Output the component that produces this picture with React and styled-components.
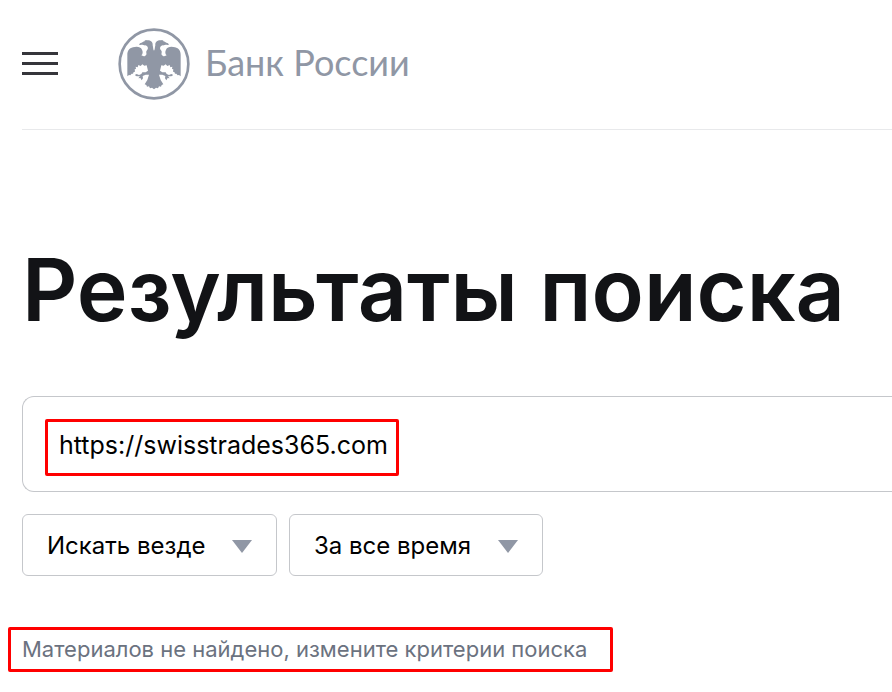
import styled, { createGlobalStyle } from 'styled-components'
import { useState } from 'react'

const GlobalStyle = createGlobalStyle`
  * {
    box-sizing: border-box;
  }

  body {
    margin: 0;
    background: #ffffff;
    color: #000000;
    font-family: Inter, 'Liberation Sans', sans-serif;
  }
`

const Page = styled.div`
  padding-left: 22px;
  overflow-x: hidden;
`

const Header = styled.header`
  display: flex;
  align-items: center;
  gap: 60px;
  height: 130px;
  padding-bottom: 2px;
  border-bottom: 1px solid #e8e9eb;
`

const MenuButton = styled.button`
  display: flex;
  flex-direction: column;
  gap: 7px;
  width: 36px;
  padding: 0;
  border: 0;
  background: none;
  cursor: pointer;
`

const MenuLine = styled.span`
  height: 3px;
  background-color: #35353b;
`

const Logo = styled.a`
  display: flex;
  align-items: center;
  gap: 15px;
  color: #9097a5;
  text-decoration: none;
`

const LogoName = styled.span`
  padding-bottom: 4px;
  font-family: Lato, sans-serif;
  font-size: 36px;
  line-height: 40px;
  white-space: nowrap;
`

const Title = styled.h1`
  margin: 110px 0 0;
  color: #121316;
  font-size: 86px;
  font-weight: 600;
  line-height: 100px;
  white-space: nowrap;
`

const SearchForm = styled.form`
  margin-top: 56px;
`

const SearchBox = styled.div`
  display: flex;
  align-items: center;
  height: 96px;
  padding: 6px 22px 0;
  border: 1px solid #c5c7cb;
  border-right: 0;
  border-radius: 12px 0 0 12px;
`

const SearchInput = styled.input`
  width: 354px;
  height: 57px;
  padding: 0 8px 4px 11px;
  border: 3px solid #ff0000;
  border-radius: 2px;
  outline: none;
  background: none;
  color: #000000;
  font-family: inherit;
  font-size: 25px;
`

const Filters = styled.div`
  display: flex;
  gap: 12px;
  margin-top: 22px;
`

const SelectWrapper = styled.div`
  display: grid;
  align-items: center;

  svg {
    grid-area: 1 / 1;
    justify-self: end;
    margin: 3px 25px 0 0;
    pointer-events: none;
  }
`

const Select = styled.select`
  grid-area: 1 / 1;
  height: 62px;
  padding: 0 70px 0 24px;
  border: 1px solid #c5c7cb;
  border-radius: 6px;
  appearance: none;
  background: none;
  color: #000000;
  font-family: inherit;
  font-size: 24px;
  cursor: pointer;
`

const EmptyResult = styled.p`
  width: fit-content;
  margin: 51px 0 20px -14px;
  padding: 5px 23px 6px 11px;
  border: 3px solid #ff0000;
  border-radius: 2px;
  color: #6b7280;
  font-size: 22px;
  line-height: 28px;
  white-space: nowrap;
`

// left half of the eagle, the right one is mirrored
const EAGLE_HALF =
  'M132 92 C129 90 130 83 128 76 C129 66 122 61 113 61 L103 60 L107 63 C100 63 97 69 90 70 L87 74 L91 75 C97 72 101 77 107 76 C114 79 116 86 111 91 C105 97 114 103 106 107 C102 110 97 108 94 106 C99 102 99 95 96 89 C92 80 80 79 69 82 C57 85 52 93 52 105 L52 169 L57 165 L61 166 L65 161 L69 161 L71 156 L75 155 L74 148 L78 147 L77 140 L83 142 L85 135 L92 138 L97 133 L103 137 L110 136 L112 144 L114 152 L107 157 L97 157 L94 162 L87 165 L80 162 L74 165 L80 169 L90 169 L85 175 L91 174 L95 181 L99 175 L98 168 L107 164 L117 164 L112 180 L104 193 L109 195 L111 200 L117 199 L120 205 L126 203 L132 208 Z'

function Emblem() {
  return (
    <svg width="72" height="72" viewBox="24 24 216 216" fill="currentColor" aria-hidden="true">
      <circle cx="132" cy="132" r="103" fill="none" stroke="currentColor" strokeWidth="8" />
      <path d={EAGLE_HALF} />
      <path d={EAGLE_HALF} transform="matrix(-1 0 0 1 264 0)" />
    </svg>
  )
}

function Arrow() {
  return (
    <svg width="20" height="13" viewBox="0 0 20 13" fill="#9097a5" aria-hidden="true">
      <path d="M0 0h20L10 13z" />
    </svg>
  )
}

function App() {
  const [query, setQuery] = useState('https://swisstrades365.com')

  return (
    <>
      <GlobalStyle />
      <Page>
        <Header>
          <MenuButton type="button" aria-label="Меню">
            <MenuLine />
            <MenuLine />
            <MenuLine />
          </MenuButton>
          <Logo href="/">
            <Emblem />
            <LogoName>Банк России</LogoName>
          </Logo>
        </Header>
        <main>
          <Title>Результаты поиска</Title>
          <SearchForm onSubmit={(e) => e.preventDefault()}>
            <SearchBox>
              <SearchInput
                type="text"
                aria-label="Поиск"
                value={query}
                onChange={(e) => setQuery(e.target.value)}
              />
            </SearchBox>
            <Filters>
              <SelectWrapper>
                <Select aria-label="Где искать">
                  <option>Искать везде</option>
                </Select>
                <Arrow />
              </SelectWrapper>
              <SelectWrapper>
                <Select aria-label="Период">
                  <option>За все время</option>
                </Select>
                <Arrow />
              </SelectWrapper>
            </Filters>
          </SearchForm>
          <EmptyResult>Материалов не найдено, измените критерии поиска</EmptyResult>
        </main>
      </Page>
    </>
  )
}

export default App
